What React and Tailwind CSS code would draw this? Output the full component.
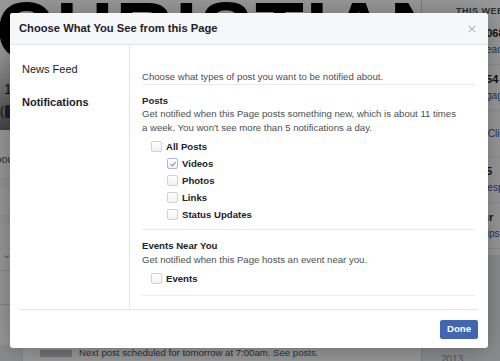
import { useState } from 'react'

const STATS = [
  { value: '1,068', label: 'Post Reach', valueIndent: 'ml-[21px]', labelIndent: 'ml-[0px]' },
  { value: '254', label: 'Post Engagement', valueIndent: 'ml-[24px]', labelIndent: 'ml-[-5px]' },
  { value: '', label: 'Website Clicks', valueIndent: '', labelIndent: 'ml-[-7px]' },
  { value: '5', label: 'Page Responses', valueIndent: 'ml-[30px]', labelIndent: 'ml-[-2px]' },
  { value: 'Your', label: 'Page Tips', valueIndent: 'ml-[13px]', labelIndent: 'ml-[-1px]' },
]

const POST_TYPES = [
  { id: 'videos', label: 'Videos', checked: true },
  { id: 'photos', label: 'Photos', checked: false },
  { id: 'links', label: 'Links', checked: false },
  { id: 'status', label: 'Status Updates', checked: false },
]

function Checkbox({ checked }) {
  return (
    <span
      className={`flex h-[11px] w-[11px] shrink-0 items-center justify-center rounded-[2px] border bg-linear-to-b from-white to-[#f1f2f4] ${
        checked ? 'border-[#a9bbdc]' : 'border-[#cfd2d6]'
      }`}
    >
      {checked && (
        <svg viewBox="0 0 10 10" className="h-[8px] w-[8px]">
          <path d="M2 5.3 4.1 7.3 8.2 2.6" fill="none" stroke="#4b4f56" strokeWidth="1.1" />
        </svg>
      )}
    </span>
  )
}

function Option({ label, checked, onToggle, nested }) {
  return (
    <div
      onClick={onToggle}
      className={`flex h-[17px] cursor-pointer items-center gap-[4px] text-[9.6px] font-bold text-[#1d2129] ${
        nested ? 'ml-[25px]' : 'ml-[9px]'
      }`}
    >
      <Checkbox checked={checked} />
      <span>{label}</span>
    </div>
  )
}

function PageBehind() {
  return (
    <div className="flex h-full">
      <div className="flex w-[422px] flex-col border-r border-[#cfd2d6]">
        {/* cover */}
        <div className="relative h-[130px] overflow-hidden bg-white">
          <div className="-mt-[9px] -ml-[4px] text-[80px] leading-none font-bold tracking-[2px] text-black">CHRISTIAN</div>
          <div className="mt-[8px] pl-[4px] text-[14px] text-[#1d2129]">1</div>
          <div className="mt-[2px] flex items-center gap-[1px]">
            <span className="text-[12px] text-[#1d2129]">(</span>
            <span className="h-[13px] w-[30px] rounded-[2px] bg-[#4267b2]" />
          </div>
          <div className="absolute inset-x-0 bottom-0 h-[75px] bg-linear-to-b from-transparent to-black/55" />
        </div>
        {/* timeline */}
        <div className="flex h-[215px]">
          <div className="w-[130px] bg-white">
            <div className="mt-[21px] -ml-[12px] text-[11px] text-[#4b4f56]">About</div>
            <div className="mt-[10px] h-[10px] bg-[#f6f7f9]" />
            <div className="mt-[26px] h-[10px] bg-[#f6f7f9]" />
            <div className="mt-[22px] pl-[2px] text-[11px] text-[#90949c]">⌄</div>
            <div className="mt-[8px] border-t border-[#dddfe2]" />
            <div className="mt-[33px] border-t border-[#dddfe2]" />
          </div>
          <div className="flex-1" />
        </div>
        <div className="ml-[22px] flex flex-1 items-center gap-[7px] border-l border-[#dddfe2] bg-white pl-[17px]">
          <span className="h-[7px] w-[32px] bg-[#bec2c9]" />
          <span className="text-[9.6px] whitespace-nowrap text-[#4b4f56]">
            Next post scheduled for tomorrow at 7:00am. <span className="text-[#365899]">See posts.</span>
          </span>
        </div>
      </div>
      <div className="flex flex-1 flex-col">
        <div className="h-[255px] bg-white pl-[34px]">
          <div className="pt-[5px] text-[9px] font-bold tracking-[0.5px] text-[#4b4f56]">THIS WEEK</div>
          {STATS.map((s) => (
            <div key={s.label} className="flex h-[46px] flex-col justify-center border-b border-[#e9ebee] text-[10px] whitespace-nowrap">
              {s.value && <span className={`text-[11px] font-bold text-[#1d2129] ${s.valueIndent}`}>{s.value}</span>}
              <span className={`text-[#365899] ${s.labelIndent}`}>{s.label}</span>
            </div>
          ))}
        </div>
        <div className="mt-auto -mb-[6px] pl-[19px] text-[10px] text-[#90949c]">2013</div>
      </div>
    </div>
  )
}

export default function App() {
  const [types, setTypes] = useState(POST_TYPES)
  const [allPosts, setAllPosts] = useState(false)
  const [events, setEvents] = useState(false)
  const [tab, setTab] = useState('notifications')

  const toggle = (id) => setTypes((t) => t.map((x) => (x.id === id ? { ...x, checked: !x.checked } : x)))

  return (
    <div className="relative h-[361px] w-[500px] overflow-hidden bg-[#e9ebee] font-['Liberation_Sans',Arial,sans-serif]">
      <PageBehind />
      <div className="absolute inset-0 bg-black/40" />

      {/* dialog */}
      <div className="absolute top-[13px] left-[10px] flex w-[478px] flex-col overflow-hidden rounded-[3px] bg-white shadow-[0_2px_26px_rgba(0,0,0,0.3)]">
        <div className="flex h-[32px] items-center justify-between border-b border-[#e5e5e5] bg-[#f6f7f9] pr-[12px] pl-[9px]">
          <span className="text-[11.2px] font-bold text-[#1d2129]">Choose What You See from this Page</span>
          <svg viewBox="0 0 10 10" className="h-[8px] w-[8px]">
            <path d="M1 1 9 9M9 1 1 9" stroke="#b4b8be" strokeWidth="1.4" />
          </svg>
        </div>

        <div className="flex h-[264px]">
          <nav className="w-[120px] border-r border-[#e5e5e5] pt-[8px]">
            {[
              ['newsfeed', 'News Feed'],
              ['notifications', 'Notifications'],
            ].map(([id, label]) => (
              <div
                key={id}
                onClick={() => setTab(id)}
                className={`flex h-[33px] cursor-pointer items-center pl-[12px] text-[11px] text-[#1d2129] ${
                  tab === id ? 'font-bold' : ''
                }`}
              >
                {label}
              </div>
            ))}
          </nav>

          <div className="flex-1 pr-[13px] pl-[12px] text-[9.6px] leading-[13.5px] text-[#4b4f56]">
            <p className="border-b border-[#e9ebee] pt-[25px]">Choose what types of post you want to be notified about.</p>

            <section className="border-b border-[#e9ebee] pt-[9px] pb-[6px]">
              <h3 className="font-bold text-[#1d2129]">Posts</h3>
              <p className="pr-[12px]">
                Get notified when this Page posts something new, which is about 11 times a week. You won't see more
                than 5 notifications a day.
              </p>
              <div className="mt-[4px]">
                <Option label="All Posts" checked={allPosts} onToggle={() => setAllPosts(!allPosts)} />
                {types.map((t) => (
                  <Option key={t.id} nested label={t.label} checked={t.checked} onToggle={() => toggle(t.id)} />
                ))}
              </div>
            </section>

            <section className="border-b border-[#e9ebee] pt-[9px] pb-[8px]">
              <h3 className="font-bold text-[#1d2129]">Events Near You</h3>
              <p className="pr-[12px]">Get notified when this Page hosts an event near you.</p>
              <div className="mt-[4px]">
                <Option label="Events" checked={events} onToggle={() => setEvents(!events)} />
              </div>
            </section>
          </div>
        </div>

        <div className="mr-[10px] ml-[9px] flex h-[39px] items-center justify-end border-t border-[#e5e5e5]">
          <button className="flex h-[19px] w-[38px] items-center justify-center rounded-[2px] border border-[#4267b2] bg-[#4267b2] text-[9.6px] font-bold text-white">
            Done
          </button>
        </div>
      </div>
    </div>
  )
}
